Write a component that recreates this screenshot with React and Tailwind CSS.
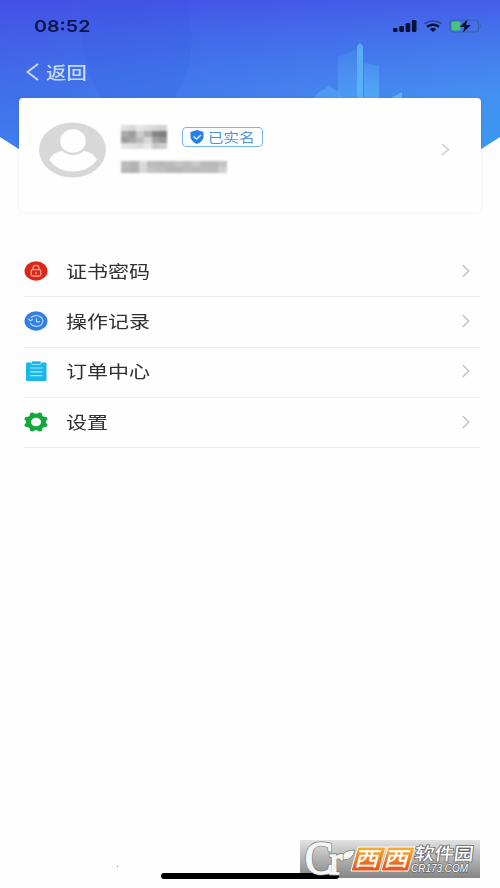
import { ChevronRight } from "lucide-react";

const CJK = "font-['Noto_Sans_CJK_SC',sans-serif]";

const StatusIcons = () => (
  <svg width="88" height="16" viewBox="0 0 88 16" className="mt-px">
    <g fill="#07123a">
      <rect x="0" y="10" width="4.6" height="4" rx="1.2" />
      <rect x="6.3" y="8" width="4.6" height="6" rx="1.2" />
      <rect x="12.6" y="5" width="4.6" height="9" rx="1.2" />
      <rect x="18.9" y="2" width="4.6" height="12" rx="1.2" />
      <path d="M36.6 11 Q40 9.2 43.4 11 L40 14Z" />
    </g>
    <path
      d="M31.5 5.6 Q40 .2 48.5 5.6"
      fill="none"
      stroke="#24448c"
      strokeWidth="1.3"
    />
    <path
      d="M34 8.8 Q40 4.6 46 8.8"
      fill="none"
      stroke="#07123a"
      strokeWidth="2.4"
    />
    <rect
      x="57"
      y="2"
      width="28.5"
      height="12"
      rx="3"
      fill="none"
      stroke="#3564a5"
      strokeWidth="1.1"
    />
    <path d="M87 6 q2 2 0 4z" fill="#3564a5" />
    <rect x="58.5" y="3.5" width="9" height="9" rx="1.5" fill="#48c47c" />
    <path d="M74.5 1.5 66.5 9h5l-1.5 5.5L78 7h-5z" fill="#07123a" />
  </svg>
);

const Skyline = () => (
  <svg viewBox="0 0 500 156" className="absolute inset-0 h-full w-full">
    <defs>
      <linearGradient id="sky" x1="0" y1="0" x2="1" y2="1">
        <stop offset="0" stopColor="#4347e0" />
        <stop offset=".3" stopColor="#4168e8" />
        <stop offset=".65" stopColor="#4785ee" />
        <stop offset="1" stopColor="#40a5f3" />
      </linearGradient>
      <linearGradient id="skyFade" x1="0" y1="0" x2="0" y2="1">
        <stop offset="0" stopColor="#4552e8" stopOpacity=".7" />
        <stop offset=".6" stopColor="#4088f0" stopOpacity=".2" />
        <stop offset="1" stopColor="#2e88f2" stopOpacity=".45" />
      </linearGradient>
      <linearGradient id="tower" x1="0" y1="0" x2="0" y2="1">
        <stop offset="0" stopColor="#5cb5fb" stopOpacity=".35" />
        <stop offset="1" stopColor="#58b5fa" stopOpacity=".85" />
      </linearGradient>
    </defs>
    <path d="M0 0H500V137L470 156H30L0 137Z" fill="url(#sky)" />
    <path d="M0 0H500V137L470 156H30L0 137Z" fill="url(#skyFade)" />
    <path d="M82 0Q75 60 108 110H168Q205 55 184 0Z" fill="#3158db" opacity=".14" />
    <path d="M338 57 357 49V100H338Z" fill="url(#tower)" opacity=".5" />
    <path d="M357 46 360 43 363 46V100H357Z" fill="#63c3fb" opacity=".7" />
    <path d="M364 63 379 66V100H364Z" fill="url(#tower)" opacity=".85" />
    <path
      d="M313 100Q317 91 325 89L329 85 333 89Q341 92 343 100Z"
      fill="#5caef8"
      opacity=".5"
    />
    <path d="M391 98 402 92V98Z" fill="#6bc5fb" opacity=".7" />
  </svg>
);

const nameMosaic = [
  ["#dedede", "#d8d8d8", "#e6e6e6", "#dedede", "#d6d6d6", "#d2d2d2"],
  ["#a9a9a9", "#9b9b9b", "#cccccc", "#b0b0b0", "#858585", "#7c7c7c"],
  ["#9c9c9c", "#a8a8a8", "#bcbcbc", "#d8d8d8", "#a4a4a4", "#989898"],
  ["#e4e4e4", "#dedede", "#dadada", "#e8e8e8", "#c8c8c8", "#cdcdcd"],
];

const phoneMosaic = [
  ["#bcbcbc", "#b4b4b4", "#dadada", "#bababa", "#b8b8b8", "#bbbbbb", "#c3c3c3", "#bdbdbd", "#c8c8c8", "#bababa", "#b8b8b8", "#c3c3c3"],
  ["#b8b8b8", "#b2b2b2", "#d8d8d8", "#c4c4c4", "#c0c0c0", "#b8b8b8", "#b8b8b8", "#bcbcbc", "#b8b8b8", "#bdbdbd", "#bababa", "#cecece"],
];

const Mosaic = ({ rows, className }) => (
  <div className={`flex flex-col blur-[0.8px] ${className}`}>
    {rows.map((row, y) => (
      <div key={y} className="flex flex-1">
        {row.map((color, x) => (
          <span key={x} className="flex-1" style={{ background: color }} />
        ))}
      </div>
    ))}
  </div>
);

const Avatar = () => (
  <svg width="67" height="56" viewBox="0 0 67 56">
    <ellipse cx="33.5" cy="28" rx="33.5" ry="27.5" fill="#d8d8d8" />
    <path
      d="M10 38Q13 30 25 28.5H43Q55 30 58 38Q49 49.5 34 49.5T10 38Z"
      fill="#fefefe"
    />
    <ellipse cx="34" cy="19" rx="14" ry="13" fill="#fefefe" stroke="#d8d8d8" strokeWidth="2.4" />
  </svg>
);

const LockIcon = () => (
  <svg width="24" height="20" viewBox="0 0 24 20">
    <ellipse cx="12" cy="10" rx="11.5" ry="9.7" fill="#d9281a" />
    <g fill="none" stroke="#ff9c90" strokeWidth="1.3">
      <rect x="7.2" y="8.7" width="9.6" height="6.3" rx="1.5" />
      <path d="M9 8.5V7Q9 4.3 12 4.3T15 7V8.5M12 11v2" />
    </g>
  </svg>
);

const HistoryIcon = () => (
  <svg width="24" height="20" viewBox="0 0 24 20">
    <ellipse cx="12" cy="10" rx="11.5" ry="9.7" fill="#2f7fe6" />
    <path
      d="M6.8 6.8Q9.5 4 13.5 4.6Q18.8 5.8 18.8 10Q18.5 15 12.8 15.4Q8 15.3 6.3 12.2M4.3 7.8 6.3 9.8 9 8.2M12.5 7.2V10.8H16"
      fill="none"
      stroke="#a9d0ff"
      strokeWidth="1.4"
    />
  </svg>
);

const OrderIcon = () => (
  <svg width="24" height="20" viewBox="0 0 24 20">
    <rect x="2" y="1.5" width="20.5" height="18.5" rx="1" fill="#18b8ee" />
    <rect x="7.5" y="0" width="9.5" height="3.5" rx="1" fill="#18b8ee" stroke="#c5effc" strokeWidth=".7" />
    <path d="M6 7H18.5M6 10.8H18.5M6 14.6H18.5" stroke="#a4e7fb" strokeWidth="1.2" />
  </svg>
);

const SettingsIcon = () => (
  <svg width="24" height="20" viewBox="0 0 24 20">
    <g transform="translate(12 10) scale(1.18 1)" stroke="#12a83b">
      <path
        d="M-3.2-7.5V-7.4M3.2-7.5V-7.4M7.7-3.1H7.6M7.7 3.1H7.6M3.2 7.5V7.4M-3.2 7.5V7.4M-7.7 3.1H-7.6M-7.7-3.1H-7.6"
        strokeWidth="4.2"
        strokeLinecap="round"
      />
      <circle r="6.4" fill="none" strokeWidth="4.2" />
    </g>
  </svg>
);

const menuItems = [
  { label: "证书密码", Icon: LockIcon },
  { label: "操作记录", Icon: HistoryIcon },
  { label: "订单中心", Icon: OrderIcon },
  { label: "设置", Icon: SettingsIcon },
];

const Watermark = () => (
  <svg viewBox="0 0 180 38" className="relative h-[38px] w-[180px] overflow-visible">
    <defs>
      <linearGradient id="orange" x1="0" y1="0" x2="0" y2="1">
        <stop offset="0" stopColor="#f7b02c" />
        <stop offset="1" stopColor="#e5501e" />
      </linearGradient>
    </defs>
    <path d="M41 17Q44 10 55 10Q53 20 43 20Z" fill="#f5f5f5" stroke="#777" strokeWidth=".8" />
    <text
      transform="translate(5 34) scale(.9 1)"
      fill="#f5f5f5"
      stroke="#777"
      strokeWidth="3"
      paintOrder="stroke"
      fontFamily="Liberation Serif, serif"
      fontSize="47"
      letterSpacing="-4"
    >
      C<tspan fontSize="43">r</tspan>
    </text>
    <text
      transform="translate(5 34) scale(.9 1)"
      fill="#f5f5f5"
      stroke="#f5f5f5"
      strokeWidth="1.6"
      fontFamily="Liberation Serif, serif"
      fontSize="47"
      letterSpacing="-4"
      aria-hidden="true"
    >
      C<tspan fontSize="43">r</tspan>
    </text>
    <path d="M58 7H86L79 31H51ZM88 7H115L108 31H81Z" fill="url(#orange)" stroke="#fff" strokeWidth="1" />
    <g
      fill="#fff"
      fontFamily="Noto Sans CJK SC, sans-serif"
      fontWeight="500"
      fontSize="20"
    >
      <text transform="translate(54 26) skewX(-15) scale(1.22 1)">西</text>
      <text transform="translate(83.5 26) skewX(-15) scale(1.22 1)">西</text>
      <text
        transform="translate(114 20) skewX(-7)"
        fontSize="17.5"
        textLength="59"
        lengthAdjust="spacingAndGlyphs"
        stroke="#666"
        strokeWidth="1.5"
        paintOrder="stroke"
      >
        软件园
      </text>
    </g>
    <text
      x="111"
      y="32"
      fill="#fff"
      stroke="#666"
      strokeWidth="1.3"
      paintOrder="stroke"
      fontFamily="Liberation Sans, sans-serif"
      fontStyle="italic"
      fontSize="10"
      textLength="57"
      lengthAdjust="spacingAndGlyphs"
    >
      CR173.COM
    </text>
  </svg>
);

export default function App() {
  return (
    <div className={`relative flex h-[888px] w-[500px] flex-col overflow-hidden bg-[#fefefe] ${CJK}`}>
      <header className="relative h-[98px] shrink-0">
        <div className="absolute inset-x-0 top-0 h-[156px]">
          <Skyline />
        </div>
        <div className="relative flex h-[50px] items-center justify-between pr-[19px] pl-[34px]">
          <span className="mt-[2px] origin-left scale-x-[1.19] font-['Inter',sans-serif] text-[16.5px] font-semibold text-[#0b164c]">
            08:52
          </span>
          <StatusIcons />
        </div>
        <div className="relative flex h-[44px] items-center pl-[26px] text-[#c6dcff]">
          <svg width="13" height="18" viewBox="0 0 13 18">
            <path d="M12 1 1.5 9 12 17" fill="none" stroke="currentColor" strokeWidth="1.9" />
          </svg>
          <span className="ml-[7px] origin-left scale-x-[1.2] text-[17px] leading-6 font-medium">
            返回
          </span>
        </div>
      </header>

      <section className="relative mx-[19px] flex h-[114px] shrink-0 rounded-[4px] bg-[#fefefe] pl-[20px] shadow-[0_0_4px_rgba(0,0,0,0.07)]">
        <div className="mt-[24px]">
          <Avatar />
        </div>
        <div className="ml-[15px] flex-1 pt-[27px]">
          <div className="flex items-center">
            <Mosaic rows={nameMosaic} className="h-[24px] w-[46px]" />
            <div className="ml-[15px] flex h-[20px] w-[81px] items-center rounded-[4px] border-[1.5px] border-[#78b4f5] pl-[7px] text-[#4a92e8]">
              <svg width="14" height="14" viewBox="0 0 14 14">
                <path d="M7 0 13.5 2V7Q13 11.5 7 14Q1 11.5.5 7V2Z" fill="#2680e8" />
                <path d="m3.5 6.5 3 2.5 4.5-4" fill="none" stroke="#d9edff" strokeWidth="1.5" />
              </svg>
              <span className="ml-1 origin-left scale-x-[1.2] text-[13px] leading-5 whitespace-nowrap">
                已实名
              </span>
            </div>
          </div>
          <Mosaic rows={phoneMosaic} className="mt-[12px] h-[12px] w-[106px]" />
        </div>
        <svg
          width="9"
          height="13"
          viewBox="0 0 9 13"
          className="mt-[45px] mr-[31px] text-[#cacaca]"
        >
          <path d="m1 1 6.5 5.5L1 12" fill="none" stroke="currentColor" strokeWidth="1.5" />
        </svg>
      </section>

      <nav className="mt-[35px] flex flex-col pr-[20px] pl-[24px]">
        {menuItems.map(({ label, Icon }) => (
          <div
            key={label}
            className="flex h-[50.3px] items-center border-b border-[#ebebeb] pb-[2px]"
          >
            <Icon />
            <span className="ml-[18px] origin-left scale-x-[1.2] text-[17.5px] leading-6 text-[#303030]">
              {label}
            </span>
            <ChevronRight
              size={22}
              strokeWidth={1.3}
              className="mr-[3px] ml-auto text-[#bdbdbd]"
            />
          </div>
        ))}
      </nav>

      <footer className="relative mt-auto flex h-[48px] pl-[300px]">
        <div className="absolute top-0 left-[300px] h-[38px] w-[180px] bg-linear-to-b from-[#e2e2e2] to-[#858585]" />
        <div className="absolute top-[33px] left-[161px] h-[6px] w-[178px] rounded-full bg-black" />
        <span className="absolute top-[26px] left-[117px] h-px w-px bg-[#8b8b42]" />
        <Watermark />
      </footer>
    </div>
  );
}
